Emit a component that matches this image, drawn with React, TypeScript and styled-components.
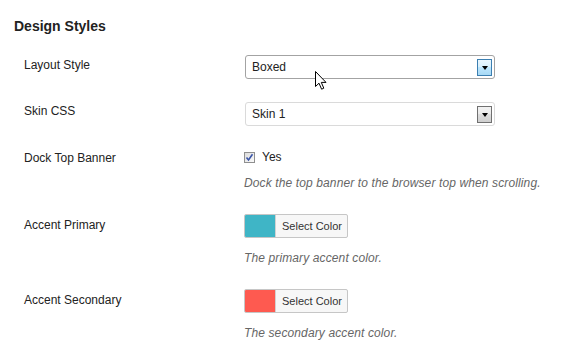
import React from "react";
import styled, { createGlobalStyle } from "styled-components";

const Global = createGlobalStyle`
  html, body { margin: 0; padding: 0; background: #fff; }
  body { font-family: "Liberation Sans", Arial, sans-serif; color: #222; }
`;

const Page = styled.div`
  position: relative;
  width: 563px;
  height: 352px;
  padding: 17px 0 0 14px;
  box-sizing: border-box;
  overflow: hidden;
`;

const Heading = styled.h3`
  margin: 0 0 20px;
  font-size: 14px;
  line-height: 18px;
  font-weight: bold;
  color: #222;
`;

const Rows = styled.div`
  display: flex;
  flex-direction: column;
  gap: 22px;
`;

const Row = styled.div<{ $extra?: number }>`
  display: grid;
  grid-template-columns: 230px 1fr;
  align-items: start;
  margin-top: ${(p) => p.$extra ?? 0}px;
`;

const Label = styled.div<{ $top?: number }>`
  padding-left: 10px;
  padding-top: ${(p) => p.$top ?? 0}px;
  font-size: 12px;
  line-height: 18px;
  color: #222;
`;

const Field = styled.div`
  display: flex;
  flex-direction: column;
  align-items: flex-start;
`;

const SelectBox = styled.div<{ $active?: boolean }>`
  box-sizing: border-box;
  width: 250px;
  height: 24px;
  margin-left: 1px;
  border: 1px solid ${(p) => (p.$active ? "#a3a3a3" : "#dadada")};
  border-radius: 3px;
  background: #fff;
  display: flex;
  align-items: center;
  justify-content: space-between;
  padding: 0 2px 0 6px;
  font-size: 12px;
  color: #222;
`;

const Arrow = styled.span<{ $active?: boolean }>`
  box-sizing: border-box;
  width: 15px;
  height: 17px;
  border: 1px solid ${(p) => (p.$active ? "#3c7fb1" : "#707070")};
  background: ${(p) =>
    p.$active
      ? "linear-gradient(#eaf6fd 0%, #d9f0fc 45%, #bee6fd 50%, #a7d9f5 100%)"
      : "linear-gradient(#f2f2f2 0%, #ebebeb 45%, #dddddd 50%, #cfcfcf 100%)"};
  display: flex;
  align-items: center;
  justify-content: center;
  &::after {
    content: "";
    border-left: 3.5px solid transparent;
    border-right: 3.5px solid transparent;
    border-top: 4px solid #000;
    margin-top: 1px;
  }
`;

const CheckLine = styled.label`
  display: flex;
  align-items: center;
  gap: 7px;
  font-size: 12px;
  line-height: 18px;
  color: #222;
`;

const CheckBox = styled.span`
  box-sizing: border-box;
  width: 11px;
  height: 11px;
  border: 1px solid #8f8f8f;
  background: linear-gradient(135deg, #dcdcdc, #fafafa);
  display: flex;
  align-items: center;
  justify-content: center;
`;

const Desc = styled.p<{ $gap: number }>`
  margin: ${(p) => p.$gap}px 0 0;
  font-size: 12px;
  line-height: 18px;
  font-style: italic;
  letter-spacing: 0.12px;
  color: #666;
`;

const ColorButton = styled.div`
  box-sizing: border-box;
  height: 24px;
  display: flex;
  border: 1px solid #c6c6c6;
  border-radius: 2px;
  background: #f7f7f7;
  overflow: hidden;
`;

const Swatch = styled.span<{ $color: string }>`
  width: 30px;
  background: ${(p) => p.$color};
  border-right: 1px solid #d2d2d2;
`;

const ButtonText = styled.span`
  display: flex;
  align-items: center;
  padding: 0 5px 0 6px;
  font-size: 11px;
  color: #333;
`;

const Cursor = styled.svg`
  position: absolute;
  left: 315px;
  top: 71px;
`;

const colorRows = [
  { label: "Accent Primary", color: "#3fb5c6", desc: "The primary accent color." },
  { label: "Accent Secondary", color: "#fe5a50", desc: "The secondary accent color." },
];

export default function App() {
  return (
    <>
      <Global />
      <Page>
        <Heading>Design Styles</Heading>
        <Rows>
          <Row>
            <Label $top={1}>Layout Style</Label>
            <Field>
              <SelectBox $active>
                <span>Boxed</span>
                <Arrow $active />
              </SelectBox>
            </Field>
          </Row>
          <Row $extra={1}>
            <Label $top={0}>Skin CSS</Label>
            <Field>
              <SelectBox>
                <span>Skin 1</span>
                <Arrow />
              </SelectBox>
            </Field>
          </Row>
          <Row>
            <Label $top={1}>Dock Top Banner</Label>
            <Field>
              <CheckLine>
                <CheckBox>
                  <svg width="9" height="9" viewBox="0 0 9 9">
                    <path d="M1.5 4.5 L3.5 7 L7.5 1.2" fill="none" stroke="#3a55a8" strokeWidth="1.6" />
                  </svg>
                </CheckBox>
                Yes
              </CheckLine>
              <Desc $gap={8}>Dock the top banner to the browser top when scrolling.</Desc>
            </Field>
          </Row>
          {colorRows.map((r) => (
            <Row key={r.label}>
              <Label $top={2}>{r.label}</Label>
              <Field>
                <ColorButton>
                  <Swatch $color={r.color} />
                  <ButtonText>Select Color</ButtonText>
                </ColorButton>
                <Desc $gap={11}>{r.desc}</Desc>
              </Field>
            </Row>
          ))}
        </Rows>
        <Cursor width="13" height="20" viewBox="0 0 13 20">
          <path
            d="M0.5 0.5 L0.5 15.5 L4 12.2 L6.6 18.2 L8.8 17.2 L6.3 11.4 L11 11.4 Z"
            fill="#fff"
            stroke="#000"
            strokeWidth="1"
            strokeLinejoin="miter"
          />
        </Cursor>
      </Page>
    </>
  );
}
